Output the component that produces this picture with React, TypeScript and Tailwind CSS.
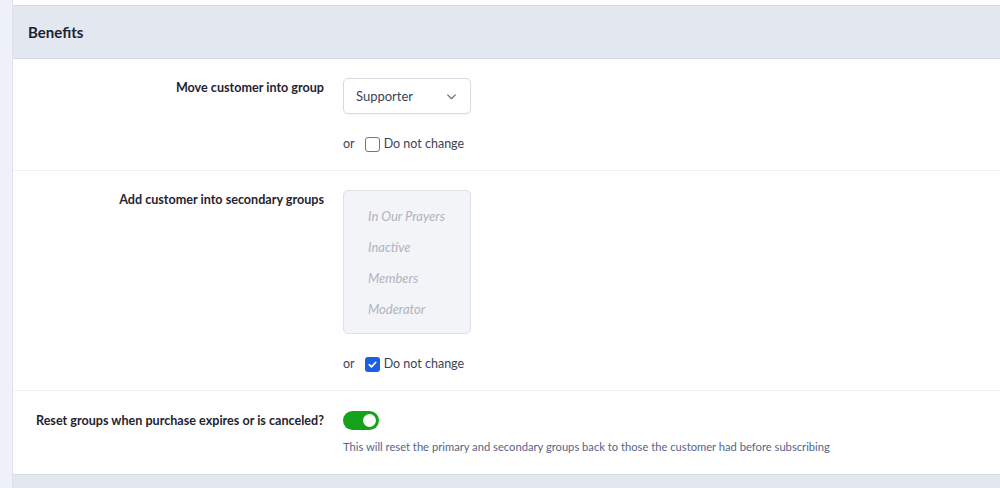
import React from "react";

const font = { fontFamily: 'Lato, "Noto Sans", Arial, sans-serif' };

function Checkbox({ checked }: { checked: boolean }) {
  return checked ? (
    <span className="flex h-[15px] w-[15px] items-center justify-center rounded-[3px] bg-[#1a5fe6]">
      <svg width="11" height="11" viewBox="0 0 12 12" fill="none">
        <path d="M2.5 6.2 L5 8.6 L9.6 3.6" stroke="#fff" strokeWidth="1.8" strokeLinecap="round" strokeLinejoin="round" />
      </svg>
    </span>
  ) : (
    <span className="block h-[15px] w-[15px] rounded-[3px] border border-[#6f7684] bg-white" />
  );
}

function OrNoChange({ checked }: { checked: boolean }) {
  return (
    <div className="flex h-5 items-center text-[12.5px] text-[#3b4456]">
      <span>or</span>
      <span className="ml-[10px]">
        <Checkbox checked={checked} />
      </span>
      <span className="ml-[4px]">Do not change</span>
    </div>
  );
}

function Label({ children }: { children: React.ReactNode }) {
  return (
    <div className="w-[311px] shrink-0 whitespace-nowrap pt-[1px] text-right text-[12.6px] font-bold leading-[18px] text-[#1f2530]">
      {children}
    </div>
  );
}

export default function App() {
  return (
    <div className="flex h-[488px] w-[1000px] overflow-hidden bg-[#eef1f8]" style={font}>
      <div className="w-[13px] shrink-0 border-r border-[#dde2ec]" />
      <div className="flex flex-1 flex-col">
        <div className="h-[5px] bg-white" />
        <div className="border-y border-[#d3d9e5] bg-[#e3e7f0]">
          <div className="flex h-[52px] items-center pl-[15px] text-[15px] font-bold text-[#1c2230]">Benefits</div>
        </div>
        <div className="border-b border-[#d3d9e5] bg-white">
          <div className="border-b border-[#eef0f3] pt-[19px] pb-[16px]">
            <div className="flex">
              <Label>Move customer into group</Label>
              <div className="ml-[19px] flex flex-col">
                <div className="flex h-[36px] w-[128px] items-center justify-between rounded-[5px] border border-[#d6dae2] bg-white pt-[1px] pl-[12px] pr-[12px] text-[13px] text-[#3b4456] shadow-[0_1px_1px_rgba(0,0,0,0.04)]">
                  <span>Supporter</span>
                  <svg width="13" height="13" viewBox="0 0 12 12" fill="none">
                    <path d="M2.5 4.5 L6 8 L9.5 4.5" stroke="#6b7280" strokeWidth="1.2" strokeLinecap="round" strokeLinejoin="round" />
                  </svg>
                </div>
                <div className="mt-[20px]">
                  <OrNoChange checked={false} />
                </div>
              </div>
            </div>
          </div>
          <div className="border-b border-[#eef0f3] pt-[19px] pb-[16px]">
            <div className="flex">
              <Label>Add customer into secondary groups</Label>
              <div className="ml-[19px] flex flex-col">
                <div className="flex h-[144px] w-[128px] flex-col rounded-[5px] border border-[#dde1e8] bg-[#f3f4f8] pt-[10px] pl-[24px] text-[13px] italic text-[#aeb4c0]">
                  {["In Our Prayers", "Inactive", "Members", "Moderator"].map((g) => (
                    <div key={g} className="flex h-[31px] items-center whitespace-nowrap">
                      {g}
                    </div>
                  ))}
                </div>
                <div className="mt-[20px]">
                  <OrNoChange checked={true} />
                </div>
              </div>
            </div>
          </div>
          <div className="pt-[20px] pb-[19px]">
            <div className="flex">
              <Label>Reset groups when purchase expires or is canceled?</Label>
              <div className="ml-[19px] flex flex-col">
                <div className="flex h-[19px] w-[36px] items-center justify-end rounded-full bg-[#16a11b] pr-[3px]">
                  <span className="block h-[13px] w-[13px] rounded-full bg-white" />
                </div>
                <div className="mt-[9px] whitespace-nowrap text-[11.2px] leading-[16px] text-[#56658a]">
                  This will reset the primary and secondary groups back to those the customer had before subscribing
                </div>
              </div>
            </div>
          </div>
        </div>
        <div className="flex-1 bg-[#e3e7f0]" />
      </div>
    </div>
  );
}
